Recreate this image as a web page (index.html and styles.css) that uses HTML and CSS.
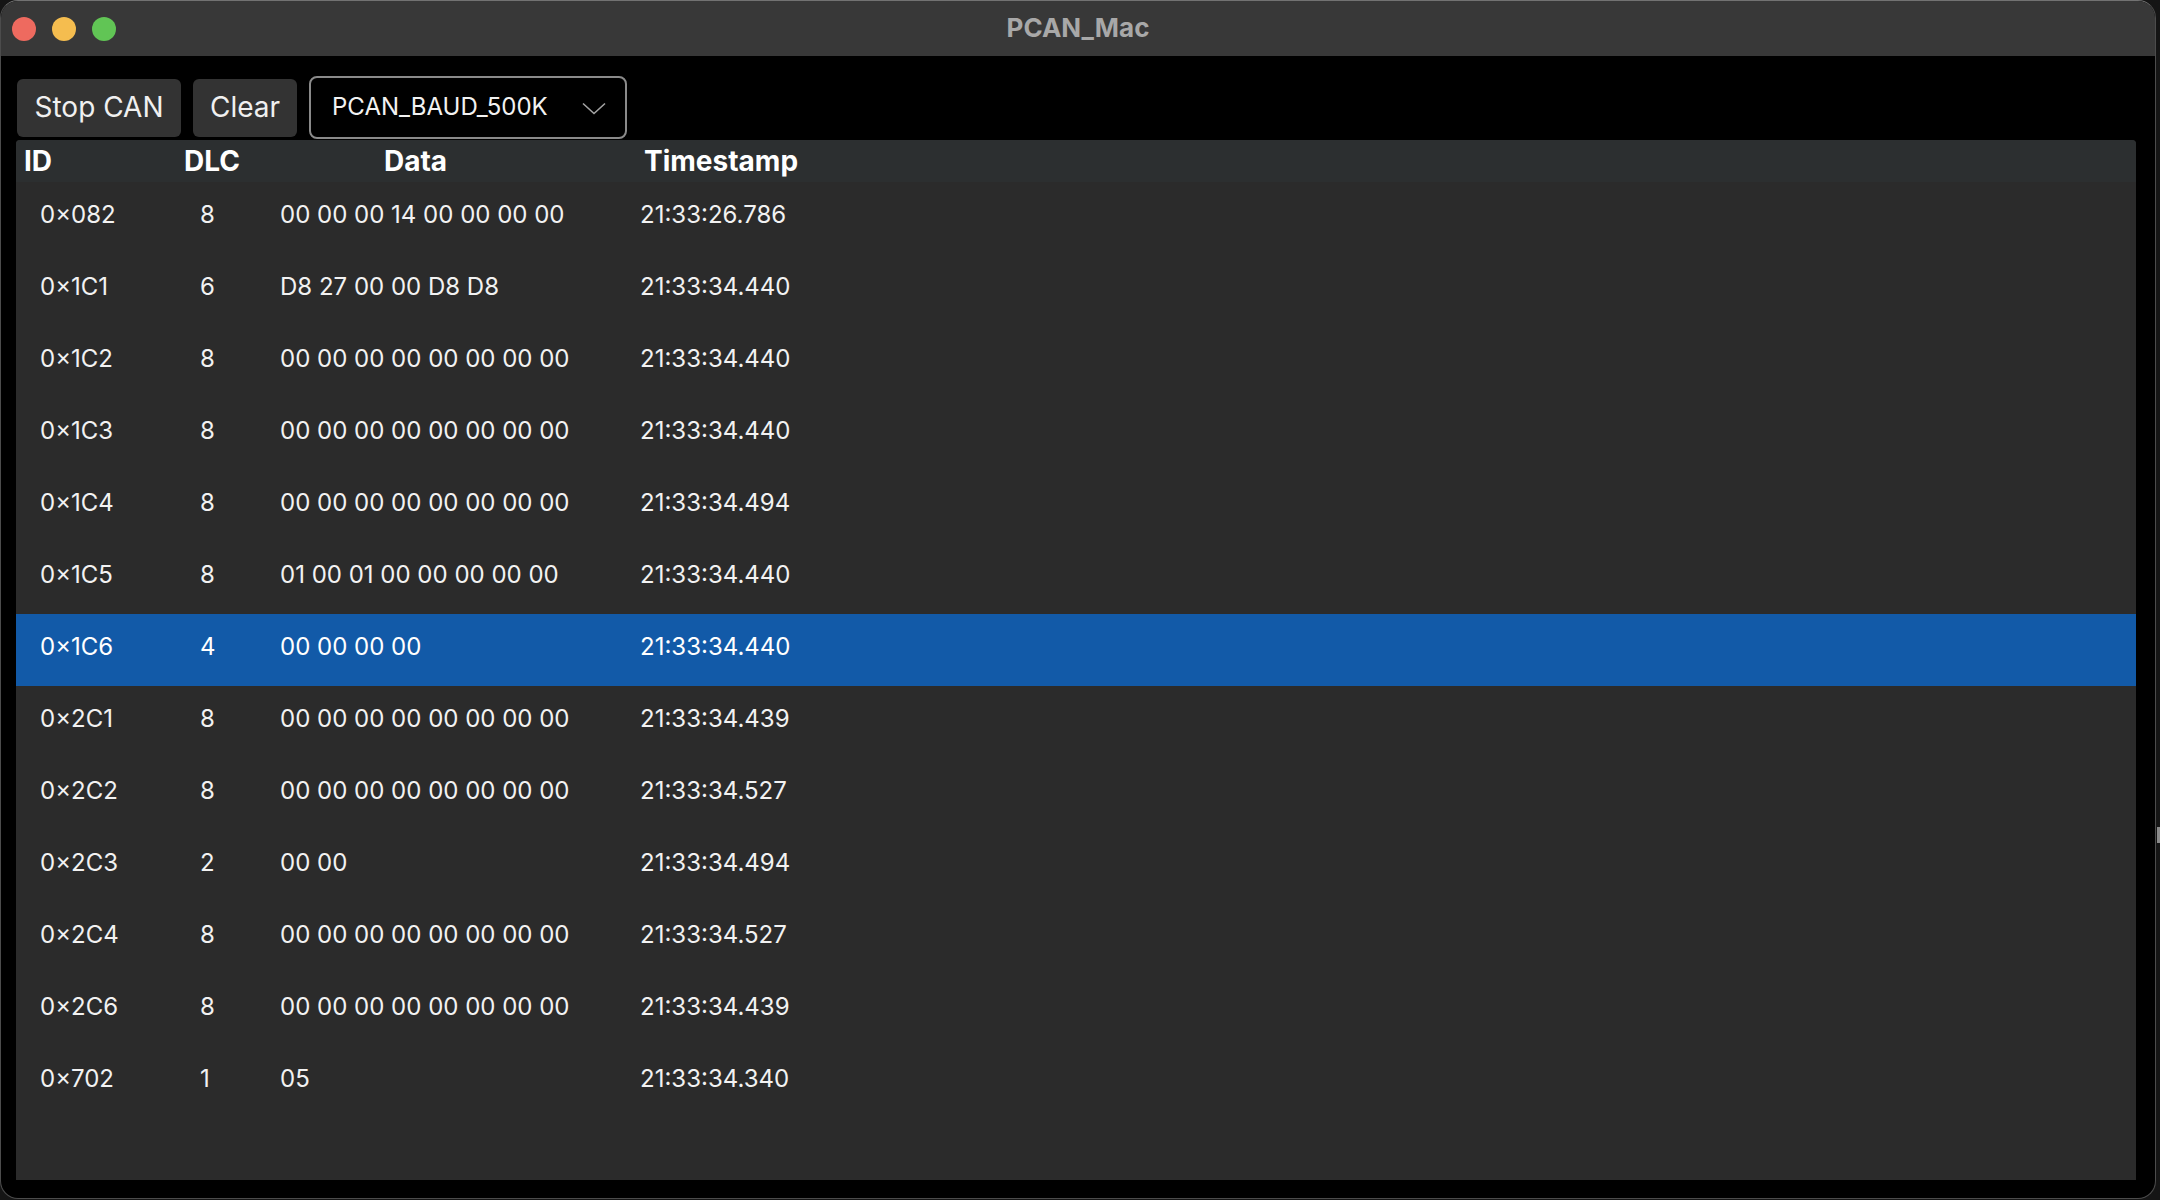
FILE: index.html
```html
<!DOCTYPE html>
<html>
<head>
<meta charset="utf-8">
<title>PCAN_Mac</title>
<link rel="stylesheet" href="styles.css">
</head>
<body>
<div class="window">
  <div class="titlebar">
    <div class="lights">
      <span class="light red"></span>
      <span class="light yellow"></span>
      <span class="light green"></span>
    </div>
    <div class="title">PCAN_Mac</div>
  </div>
  <div class="content">
    <div class="toolbar">
      <button class="btn btn-stop">Stop CAN</button>
      <button class="btn btn-clear">Clear</button>
      <div class="select">
        <span class="select-text">PCAN_BAUD_500K</span>
        <svg class="chev" width="24" height="13" viewBox="0 0 24 13"><path d="M1 1.5 L12 11.5 L23 1.5" fill="none" stroke="#a3a3a3" stroke-width="1.6"/></svg>
      </div>
    </div>
    <div class="table">
      <div class="thead">
        <div class="th th-id">ID</div>
        <div class="th th-dlc">DLC</div>
        <div class="th th-data">Data</div>
        <div class="th th-ts">Timestamp</div>
      </div>
      <div class="tbody">
        <div class="row"><div class="td td-id">0×082</div><div class="td td-dlc">8</div><div class="td td-data">00 00 00 14 00 00 00 00</div><div class="td td-ts">21:33:26.786</div></div>
        <div class="row"><div class="td td-id">0×1C1</div><div class="td td-dlc">6</div><div class="td td-data">D8 27 00 00 D8 D8</div><div class="td td-ts">21:33:34.440</div></div>
        <div class="row"><div class="td td-id">0×1C2</div><div class="td td-dlc">8</div><div class="td td-data">00 00 00 00 00 00 00 00</div><div class="td td-ts">21:33:34.440</div></div>
        <div class="row"><div class="td td-id">0×1C3</div><div class="td td-dlc">8</div><div class="td td-data">00 00 00 00 00 00 00 00</div><div class="td td-ts">21:33:34.440</div></div>
        <div class="row"><div class="td td-id">0×1C4</div><div class="td td-dlc">8</div><div class="td td-data">00 00 00 00 00 00 00 00</div><div class="td td-ts">21:33:34.494</div></div>
        <div class="row"><div class="td td-id">0×1C5</div><div class="td td-dlc">8</div><div class="td td-data">01 00 01 00 00 00 00 00</div><div class="td td-ts">21:33:34.440</div></div>
        <div class="row selected"><div class="td td-id">0×1C6</div><div class="td td-dlc">4</div><div class="td td-data">00 00 00 00</div><div class="td td-ts">21:33:34.440</div></div>
        <div class="row"><div class="td td-id">0×2C1</div><div class="td td-dlc">8</div><div class="td td-data">00 00 00 00 00 00 00 00</div><div class="td td-ts">21:33:34.439</div></div>
        <div class="row"><div class="td td-id">0×2C2</div><div class="td td-dlc">8</div><div class="td td-data">00 00 00 00 00 00 00 00</div><div class="td td-ts">21:33:34.527</div></div>
        <div class="row"><div class="td td-id">0×2C3</div><div class="td td-dlc">2</div><div class="td td-data">00 00</div><div class="td td-ts">21:33:34.494</div></div>
        <div class="row"><div class="td td-id">0×2C4</div><div class="td td-dlc">8</div><div class="td td-data">00 00 00 00 00 00 00 00</div><div class="td td-ts">21:33:34.527</div></div>
        <div class="row"><div class="td td-id">0×2C6</div><div class="td td-dlc">8</div><div class="td td-data">00 00 00 00 00 00 00 00</div><div class="td td-ts">21:33:34.439</div></div>
        <div class="row"><div class="td td-id">0×702</div><div class="td td-dlc">1</div><div class="td td-data">05</div><div class="td td-ts">21:33:34.340</div></div>
      </div>
    </div>
  </div>
</div>
<div class="desk">
  <div class="desk-mark"></div>
</div>
</body>
</html>
```

FILE: styles.css
```css
html, body {
  margin: 0;
  padding: 0;
}
body {
  width: 2160px;
  height: 1200px;
  background: #151515;
  display: flex;
  overflow: hidden;
  font-family: Inter, "Noto Sans", sans-serif;
}
.window {
  width: 2156px;
  height: 1199px;
  box-sizing: border-box;
  border: 1px solid #4c4c4c;
  border-top-color: #727272;
  border-radius: 18px;
  overflow: hidden;
  display: flex;
  flex-direction: column;
  background: #000;
}
.titlebar {
  height: 55px;
  flex: none;
  background: #383838;
  display: flex;
  align-items: center;
  position: relative;
}
.lights {
  display: flex;
  gap: 16px;
  padding-left: 11px;
}
.light {
  width: 24px;
  height: 24px;
  border-radius: 50%;
  display: block;
}
.red { background: #ee6a5f; }
.yellow { background: #f5bd4f; }
.green { background: #61c555; }
.title {
  position: absolute;
  left: 0;
  right: 0;
  top: 0;
  height: 53px;
  line-height: 53px;
  text-align: center;
  color: #a8a8a8;
  font-weight: 700;
  font-size: 26px;
  pointer-events: none;
}
.content {
  flex: 1;
  display: flex;
  flex-direction: column;
  padding: 20px 19px 18px 15px;
  min-height: 0;
}
.toolbar {
  display: flex;
  align-items: center;
  gap: 12px;
  height: 63px;
  margin-left: 1px;
  margin-bottom: 1px;
  flex: none;
}
.btn {
  height: 58px;
  border: none;
  border-radius: 6px;
  background: #333333;
  color: #f0f0f0;
  font-family: Inter, "Noto Sans", sans-serif;
  font-size: 28px;
  padding: 0 0 2px 0;
  text-align: center;
}
.btn-stop { width: 164px; }
.btn-clear { width: 104px; }
.select {
  width: 318px;
  height: 63px;
  box-sizing: border-box;
  border: 2px solid #8a8a8a;
  border-radius: 8px;
  background: #000;
  display: flex;
  align-items: center;
  padding: 0 0 3px 21px;
  color: #f2f2f2;
  font-size: 24px;
}
.select-text {
  flex: none;
}
.chev {
  margin-left: auto;
  margin-right: 19px;
  margin-top: 4px;
}
.table {
  flex: 1;
  background: #2b2b2b;
  border-radius: 4px 4px 0 0;
  overflow: hidden;
  display: flex;
  flex-direction: column;
}
.thead {
  height: 42px;
  background: #2c2f30;
  display: flex;
  flex: none;
  color: #ffffff;
  font-weight: 700;
  font-size: 28px;
  line-height: 42px;
}
.th { white-space: nowrap; }
.th-id { width: 160px; padding-left: 8px; }
.th-dlc { width: 86px; padding-left: 0; }
.th-data { width: 260px; padding-left: 114px; }
.th-ts { padding-left: 0; }
.tbody {
  display: flex;
  flex-direction: column;
}
.row {
  height: 72px;
  display: flex;
  color: #f2f2f2;
  font-size: 24px;
  line-height: 66px;
}
.row.selected {
  background: #125aa8;
  color: #ffffff;
}
.td { white-space: nowrap; }
.td-id { width: 161px; padding-left: 24px; box-sizing: border-box; }
.td-dlc { width: 79px; padding-left: 23px; box-sizing: border-box; }
.td-data { width: 360px; padding-left: 24px; box-sizing: border-box; }
.td-ts { padding-left: 24px; }
.desk {
  flex: 1;
  display: flex;
  flex-direction: column;
}
.desk-mark {
  margin-top: 827px;
  margin-left: 1px;
  width: 3px;
  height: 16px;
  background: #8a8a8a;
}
```
